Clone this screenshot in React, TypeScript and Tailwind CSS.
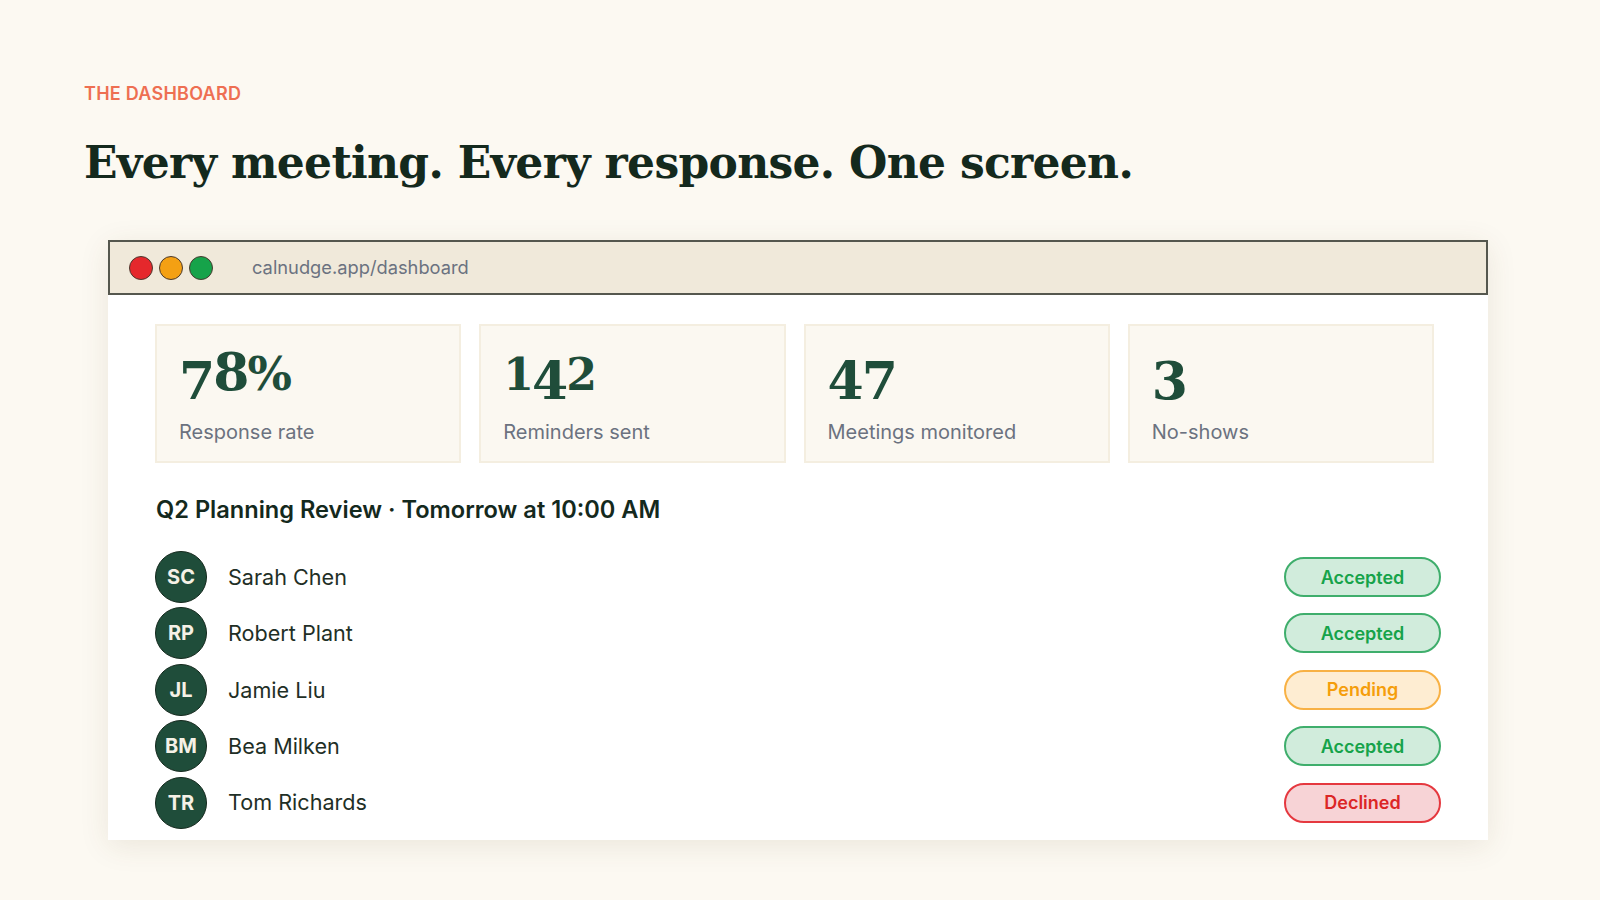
const people = [
  { i: "SC", n: "Sarah Chen", s: "Accepted" },
  { i: "RP", n: "Robert Plant", s: "Accepted" },
  { i: "JL", n: "Jamie Liu", s: "Pending" },
  { i: "BM", n: "Bea Milken", s: "Accepted" },
  { i: "TR", n: "Tom Richards", s: "Declined" },
];

const badge: Record<string, string> = {
  Accepted: "bg-[#d1ecdc] border-[#3fae6c] text-[#16a34a]",
  Pending: "bg-[#feedd2] border-[#f8b144] text-[#f59e0b]",
  Declined: "bg-[#f7d3d6] border-[#e5383f] text-[#dc2626]",
};

// Old-style figures, as the reference's serif draws them
const D = ({ c }: { c: string }) => <span className="align-[-0.17em]">{c}</span>;
const S = ({ c }: { c: string }) => <span className="text-[0.85em]">{c}</span>;

const stats = [
  { v: <><D c="7" /><span>8</span><span className="text-[0.9em]">%</span></>, l: "Response rate" },
  { v: <><S c="1" /><D c="4" /><S c="2" /></>, l: "Reminders sent" },
  { v: <><D c="4" /><D c="7" /></>, l: "Meetings monitored" },
  { v: <D c="3" />, l: "No-shows" },
];

export default function App() {
  return (
    <div className="h-[900px] w-[1600px] overflow-hidden bg-[#fcf9f2] pl-[84px] pt-[84px] font-['Inter',sans-serif]">
      <div className="text-[18px] font-semibold leading-[20px] tracking-[0.25px] text-[#ee6f52]">THE DASHBOARD</div>
      <h1 className="mt-[31px] whitespace-nowrap font-['DejaVu_Serif',serif] text-[44px] font-bold leading-[56px] tracking-[-0.7px] text-[#14291d]">
        Every meeting. Every response. One screen.
      </h1>
      <div className="ml-[24px] mt-[49px] w-[1380px] bg-white shadow-[0_6px_28px_rgba(90,70,30,0.10)]">
        <div className="flex h-[55px] items-center border-2 border-[#55574e] bg-[#f0e9da] pl-[19px]">
          <div className="flex gap-[6px]">
            <div className="h-[24px] w-[24px] rounded-full border border-[#4a3a30] bg-[#e5282c]" />
            <div className="h-[24px] w-[24px] rounded-full border border-[#4a3a30] bg-[#f4a013]" />
            <div className="h-[24px] w-[24px] rounded-full border border-[#4a3a30] bg-[#16a34a]" />
          </div>
          <div className="ml-[39px] text-[18.3px] text-[#6b7280]">calnudge.app/dashboard</div>
        </div>
        <div className="px-[47px] pb-[11px] pt-[29px]">
          <div className="grid w-[1279px] grid-cols-4 gap-[18px]">
            {stats.map((s) => (
              <div key={s.l} className="h-[139px] border-2 border-[#f4eee0] bg-[#fbf8f1] pl-[22px] pt-[16px]">
                <div className="h-[64px] font-['DejaVu_Serif',serif] text-[52px] font-bold leading-[60px] tracking-[-2px] text-[#1f4d3a]">
                  {s.v}
                </div>
                <div className="mt-[14px] text-[20px] leading-[24px] text-[#6b7280]">{s.l}</div>
              </div>
            ))}
          </div>
          <div className="mt-[33px] pl-[1px] text-[23.6px] font-semibold leading-[28px] text-[#14291d]">
            Q2 Planning Review · Tomorrow at 10:00 AM
          </div>
          <div className="mt-[27px] flex flex-col gap-[4.4px]">
            {people.map((p) => (
              <div key={p.i} className="flex h-[52px] items-center">
                <div className="flex h-[52px] w-[52px] items-center justify-center rounded-full border border-[#14291d] bg-[#1f4d3a] text-[20px] font-bold text-[#f5f1e6]">
                  {p.i}
                </div>
                <div className="ml-[21px] text-[21.6px] text-[#1f2f26]">{p.n}</div>
                <div
                  className={`ml-auto flex h-[40px] w-[157px] items-center justify-center rounded-full border-2 text-[18px] font-semibold ${badge[p.s]}`}
                >
                  {p.s}
                </div>
              </div>
            ))}
          </div>
        </div>
      </div>
    </div>
  );
}
